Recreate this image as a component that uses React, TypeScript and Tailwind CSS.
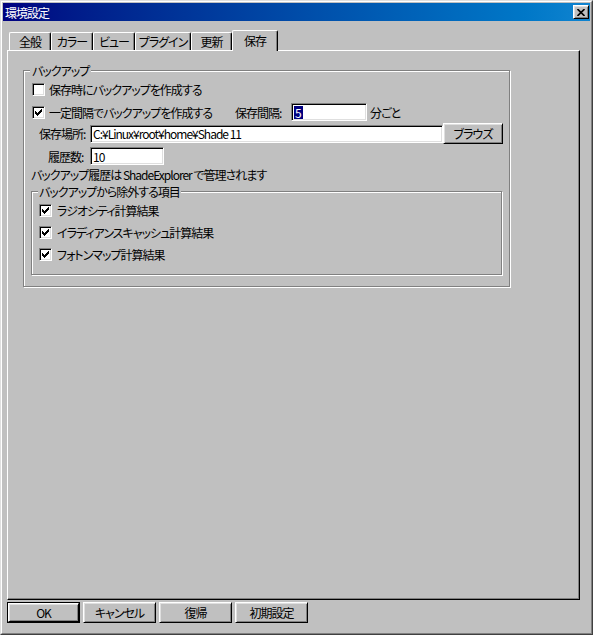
import React from 'react';

const ui =
  "font-['Noto_Sans_CJK_JP','Noto_Sans',sans-serif] text-[12px] leading-[13px] tracking-[-1px] whitespace-nowrap text-black [font-feature-settings:'palt']";

const sunken =
  'bg-white border border-t-[#808080] border-l-[#808080] border-r-white border-b-white shadow-[inset_1px_1px_0_#000,inset_-1px_-1px_0_#dfdfdf]';

const raised =
  'bg-[#c0c0c0] border border-t-white border-l-white border-r-black border-b-black shadow-[inset_1px_1px_0_#dfdfdf,inset_-1px_-1px_0_#808080]';

function Check({ checked }: { checked?: boolean }) {
  return (
    <span className={`w-[13px] h-[13px] shrink-0 flex items-center justify-center ${sunken}`}>
      {checked ? (
        <svg width="7" height="7" viewBox="0 0 7 7" shapeRendering="crispEdges">
          <rect x="6" y="0" width="1" height="1" />
          <rect x="5" y="1" width="2" height="1" />
          <rect x="0" y="2" width="1" height="1" />
          <rect x="4" y="2" width="3" height="1" />
          <rect x="0" y="3" width="2" height="1" />
          <rect x="3" y="3" width="3" height="1" />
          <rect x="0" y="4" width="5" height="1" />
          <rect x="1" y="5" width="3" height="1" />
          <rect x="2" y="6" width="1" height="1" />
        </svg>
      ) : null}
    </span>
  );
}

function Field({ className, children }: { className: string; children?: React.ReactNode }) {
  return (
    <div className={`h-[18px] shrink-0 flex items-center pl-[2px] overflow-hidden ${sunken} ${className}`}>
      {children}
    </div>
  );
}

function Btn({ label, className, def }: { label: string; className: string; def?: boolean }) {
  if (def) {
    return (
      <div className={`border border-black ${className}`}>
        <div className={`w-full h-full flex items-center justify-center ${raised}`}>{label}</div>
      </div>
    );
  }
  return <div className={`flex items-center justify-center ${raised} ${className}`}>{label}</div>;
}

function Tab({ label, className }: { label: string; className: string }) {
  return (
    <div
      className={`h-[18px] flex items-center justify-center rounded-t-[2px] border-l border-t border-r border-l-white border-t-white border-r-black shadow-[inset_-1px_0_0_#808080] ${className}`}
    >
      {label}
    </div>
  );
}

export default function App() {
  return (
    <div
      className={`w-[593px] h-[635px] bg-[#c0c0c0] border border-t-[#dfdfdf] border-l-[#dfdfdf] border-r-[#404040] border-b-[#404040] ${ui}`}
    >
      <div className="h-full border border-t-white border-l-white border-r-[#808080] border-b-[#808080] p-[1px] flex flex-col">
        {/* title bar */}
        <div className="h-[18px] shrink-0 flex items-center justify-between bg-linear-to-r from-[#000080] to-[#1084d0] pl-[2px] pr-[1px]">
          <span className="text-white">環境設定</span>
          <div className={`w-[16px] h-[14px] flex items-center justify-center ${raised}`}>
            <svg width="8" height="7" viewBox="0 0 8 7">
              <path d="M0.5 0 L7.5 7 M7.5 0 L0.5 7" stroke="#000" strokeWidth="1.6" fill="none" />
            </svg>
          </div>
        </div>

        <div className="mt-[9px] ml-[4px] mr-[10px] flex flex-col">
          {/* tabs */}
          <div className="h-[20px] flex items-end pl-[2px]">
            <Tab label="全般" className="w-[42px]" />
            <Tab label="カラー" className="w-[42px]" />
            <Tab label="ビュー" className="w-[42px]" />
            <Tab label="プラグイン" className="w-[56px]" />
            <Tab label="更新" className="w-[41px]" />
            <div className="relative z-10 -mb-[1px] w-[46px] h-[21px] bg-[#c0c0c0] flex justify-center pt-[3px] rounded-t-[2px] border-l border-t border-r border-l-white border-t-white border-r-black shadow-[inset_-1px_0_0_#808080]">
              保存
            </div>
          </div>

          {/* panel */}
          <div className="h-[550px] border border-t-white border-l-white border-r-black border-b-black shadow-[inset_-1px_-1px_0_#808080]">
            <div className="relative ml-[15px] mt-[19px] w-[487px] border border-[#808080] shadow-[inset_1px_1px_0_#fff,1px_1px_0_#fff] pb-[11px] flex flex-col">
              <span className="absolute left-[6px] top-[-7px] px-[2px] bg-[#c0c0c0]">バックアップ</span>

              <div className="mt-[12px] ml-[8px] h-[13px] flex items-center">
                <Check />
                <span className="ml-[4px]">保存時にバックアップを作成する</span>
              </div>

              <div className="mt-[7px] ml-[8px] h-[18px] flex items-center">
                <Check checked />
                <span className="ml-[4px] w-[186px] shrink-0">一定間隔でバックアップを作成する</span>
                <span className="w-[56px] shrink-0">保存間隔:</span>
                <Field className="w-[76px]">
                  <span className="bg-[#000080] text-white px-[1px] tracking-normal">5</span>
                </Field>
                <span className="ml-[3px]">分ごと</span>
              </div>

              <div className="mt-[2px] ml-[15px] h-[21px] flex items-center">
                <span className="w-[51px] shrink-0">保存場所:</span>
                <Field className="w-[353px]">C:¥Linux¥root¥home¥Shade 11</Field>
                <Btn label="ブラウズ" className="w-[60px] h-[21px]" />
              </div>

              <div className="mt-[3px] ml-[24px] h-[18px] flex items-center">
                <span className="w-[42px] shrink-0">履歴数:</span>
                <Field className="w-[74px]">10</Field>
              </div>

              <div className="mt-[3px] ml-[7px] h-[13px]">
                バックアップ履歴は ShadeExplorer で管理されます
              </div>

              <div className="relative mt-[10px] ml-[7px] w-[471px] h-[84px] border border-[#808080] shadow-[inset_1px_1px_0_#fff,1px_1px_0_#fff] flex flex-col">
                <span className="absolute left-[6px] top-[-7px] px-[1px] bg-[#c0c0c0]">
                  バックアップから除外する項目
                </span>
                <div className="mt-[12px] ml-[7px] h-[13px] flex items-center">
                  <Check checked />
                  <span className="ml-[5px]">ラジオシティ計算結果</span>
                </div>
                <div className="mt-[9px] ml-[7px] h-[13px] flex items-center">
                  <Check checked />
                  <span className="ml-[5px]">イラディアンスキャッシュ計算結果</span>
                </div>
                <div className="mt-[9px] ml-[7px] h-[13px] flex items-center">
                  <Check checked />
                  <span className="ml-[5px]">フォトンマップ計算結果</span>
                </div>
              </div>
            </div>
          </div>
        </div>

        {/* bottom buttons */}
        <div className="mt-[2px] ml-[4px] flex gap-[3px]">
          <Btn label="OK" def className="w-[73px] h-[21px]" />
          <Btn label="キャンセル" className="w-[73px] h-[21px]" />
          <Btn label="復帰" className="w-[73px] h-[21px]" />
          <Btn label="初期設定" className="w-[73px] h-[21px]" />
        </div>
      </div>
    </div>
  );
}
